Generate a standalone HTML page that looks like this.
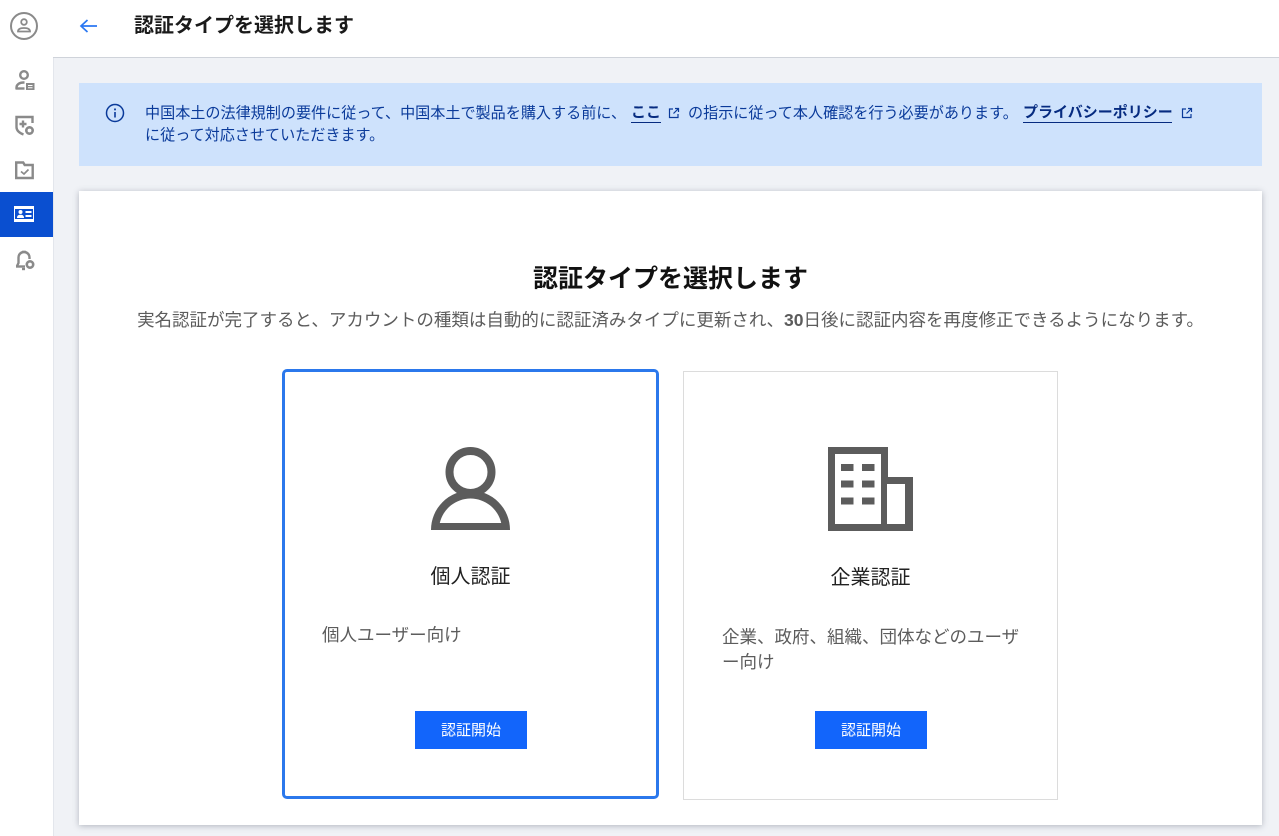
<!DOCTYPE html>
<html lang="ja">
<head>
<meta charset="utf-8">
<title>認証タイプを選択します</title>
<style>
*{box-sizing:border-box}
html,body{margin:0;padding:0}
body{width:1279px;height:836px;overflow:hidden;position:relative;background:#f0f2f6;font-family:"Liberation Sans","Noto Sans CJK JP",sans-serif}
.a{position:absolute;white-space:nowrap}
svg{position:absolute;display:block}
.sb{left:0;top:0;width:53px;height:836px;background:#fff}
.sbl{left:53px;top:0;width:1px;height:836px;background:#e3e6ec}
.hd{left:53px;top:0;width:1226px;height:58px;background:#fff;border-bottom:1px solid #cfd3da}
.ban{left:79px;top:83px;width:1183px;height:83px;background:#cee2fc}
.card{left:79px;top:191px;width:1183px;height:634px;background:#fff;box-shadow:0 1px 6px rgba(60,70,90,.35)}
.t{font-size:15.100px;line-height:20px;color:#0a3a9a}
.l{font-weight:700;color:#062b80;border-bottom:1.5px solid #062b80;line-height:18px;height:19px;font-size:15px}
.btn{width:112px;height:38px;background:#1265fb;color:#fff;font-size:15px;line-height:39px;text-align:center}
.g{font-size:17.5px;line-height:25px;color:#5c5c5c}
</style>
</head>
<body>
<div class="a sb"></div>
<div class="a sbl"></div>
<div class="a hd"></div>

<svg style="left:9px;top:11px" width="30" height="30" viewBox="0 0 30 30" fill="none" stroke="#8a8a8a" stroke-width="2"><circle cx="15" cy="15" r="13"/><circle cx="15" cy="11" r="2.800" stroke-width="1.800"/><path d="M9 20.500c0-2.500 2.500-3.500 6-3.500s6 1 6 3.500z" stroke-width="1.800"/></svg>

<svg style="left:14px;top:68px" width="22" height="23" viewBox="0 0 22 23" fill="none" stroke="#8a8a8a" stroke-width="2.400"><circle cx="10" cy="7" r="3.800"/><path d="M2.500 21v-1.500c0-3 3-5 7-5h1"/><path d="M1.500 20.500h9"/><rect x="12" y="15" width="8.500" height="7" fill="#8a8a8a" stroke="none"/><path d="M14 17.500h4.500M14 19.700h4.500" stroke="#fff" stroke-width="1"/></svg>

<svg style="left:14px;top:114px" width="22" height="23" viewBox="0 0 22 23" fill="none" stroke="#8a8a8a" stroke-width="2.400"><path d="M18.500 9V3H2.500v10c0 3.500 3 6 7 7.500"/><path d="M5.500 10h7M9 6.500v7"/><circle cx="15.500" cy="16.500" r="3.200" stroke-width="2.600"/></svg>

<svg style="left:14px;top:160px" width="21" height="20" viewBox="0 0 21 20" fill="none" stroke="#8a8a8a"><path d="M2.200 18V2.500h7l1.500 2.500h8v13z" stroke-width="2.400"/><path d="M7 11.500l3 2.500 4.500-4.500" stroke-width="1.700"/></svg>

<div class="a" style="left:0;top:192px;width:53px;height:45px;background:#0a4fd0"></div>
<svg style="left:14px;top:206px" width="20" height="17" viewBox="0 0 20 17"><rect width="20" height="16" fill="#fff"/><rect x="1" y="3" width="18" height="10" fill="#0a4fd0"/><circle cx="6.500" cy="6" r="2" fill="#fff"/><path d="M3 12c0-2.500 1.500-3.200 3.500-3.200S10 9.500 10 12z" fill="#fff"/><path d="M11.500 6h6M11.500 10h6" stroke="#fff" stroke-width="2"/></svg>

<svg style="left:14px;top:249px" width="22" height="22" viewBox="0 0 22 22" fill="none" stroke="#8a8a8a" stroke-width="2.400"><path d="M2 17.500h9"/><path d="M3 17l1.500-3V8.500c0-3 2.300-5.500 5.500-5.500s5.500 2.500 5.500 5.500v1.500"/><path d="M8 2.500h4" stroke-width="1.500"/><path d="M8 20h3"/><circle cx="16" cy="15.500" r="3.200" stroke-width="2.600"/></svg>

<svg style="left:79px;top:17px" width="19" height="18" viewBox="0 0 19 18" fill="none" stroke="#2b78f2" stroke-width="1.700"><path d="M18 9H2M8.500 3L2 9l6.500 6"/></svg>
<div class="a" style="left:134px;top:13px;font-size:20px;line-height:26px;font-weight:700;color:#1a1a1a">認証タイプを選択します</div>

<div class="a ban"></div>
<svg style="left:105px;top:103px" width="20" height="20" viewBox="0 0 20 20" fill="none" stroke="#0a3a9a" stroke-width="1.500"><circle cx="10" cy="10" r="8.500"/><path d="M10 9v5.500" stroke-width="1.600"/><path d="M10 5.500v1.800" stroke-width="1.800"/></svg>
<div class="a t" style="left:145px;top:104px">中国本土の法律規制の要件に従って、中国本土で製品を購入する前に、</div>
<div class="a t l" style="left:631px;top:104px">ここ</div>
<svg style="left:668px;top:107px" width="12" height="12" viewBox="0 0 12 12" fill="none" stroke="#0a3a9a" stroke-width="1.200"><path d="M5 2H1.500v8.500H10V7"/><path d="M7 1.500h3.500V5M10.500 1.500L5.500 6.500"/></svg>
<div class="a t" style="left:688px;top:104px">の指示に従って本人確認を行う必要があります。</div>
<div class="a t l" style="left:1023px;top:104px;width:149px">プライバシーポリシー</div>
<svg style="left:1181px;top:107px" width="12" height="12" viewBox="0 0 12 12" fill="none" stroke="#0a3a9a" stroke-width="1.200"><path d="M5 2H1.500v8.500H10V7"/><path d="M7 1.500h3.500V5M10.500 1.500L5.500 6.500"/></svg>
<div class="a t" style="left:145px;top:126px">に従って対応させていただきます。</div>

<div class="a card"></div>
<div class="a" style="left:79px;top:263px;width:1183px;text-align:center;font-size:25px;line-height:32px;font-weight:700;color:#111">認証タイプを選択します</div>
<div class="a" style="left:79px;top:308px;width:1183px;text-align:center;font-size:17.500px;line-height:24px;color:#5c5c5c">実名認証が完了すると、アカウントの種類は自動的に認証済みタイプに更新され、<b style="font-weight:700">30</b>日後に認証内容を再度修正できるようになります。</div>

<div class="a" style="left:282px;top:369px;width:377px;height:430px;border:3px solid #2b78ec;border-radius:5px;background:#fff"></div>
<svg style="left:431px;top:447px" width="80" height="84" viewBox="0 0 80 84"><path fill="#5c5c5c" d="M0 83A39.500 39.500 0 0 1 79 83z"/><path fill="#fff" d="M8.800 76A31.500 31.500 0 0 1 70.200 76z"/><circle cx="39.500" cy="25" r="21" fill="#fff" stroke="#5c5c5c" stroke-width="8"/></svg>
<div class="a" style="left:282px;top:563px;width:377px;text-align:center;font-size:20px;line-height:28px;color:#222">個人認証</div>
<div class="a g" style="left:322px;top:623px">個人ユーザー向け</div>
<div class="a btn" style="left:415px;top:711px">認証開始</div>

<div class="a" style="left:683px;top:371px;width:375px;height:429px;border:1px solid #dcdcdc;background:#fff"></div>
<svg style="left:828px;top:447px" width="85" height="84" viewBox="0 0 85 84"><path fill="#5c5c5c" fill-rule="evenodd" d="M0 0h60v30h25v54H0zM7 7v70h46V7zM59 37v40h18V37z"/><path fill="#5c5c5c" d="M13 17h12.500v7H13zM34 17h12.500v7H34zM13 33.500h12.500v7H13zM34 33.500h12.500v7H34zM13 50.500h12.500v7H13zM34 50.500h12.500v7H34z"/></svg>
<div class="a" style="left:683px;top:564px;width:375px;text-align:center;font-size:20px;line-height:28px;color:#222">企業認証</div>
<div class="a g" style="left:722px;top:625px;width:305px;white-space:normal">企業、政府、組織、団体などのユーザ<br>ー向け</div>
<div class="a btn" style="left:815px;top:711px">認証開始</div>
</body>
</html>
